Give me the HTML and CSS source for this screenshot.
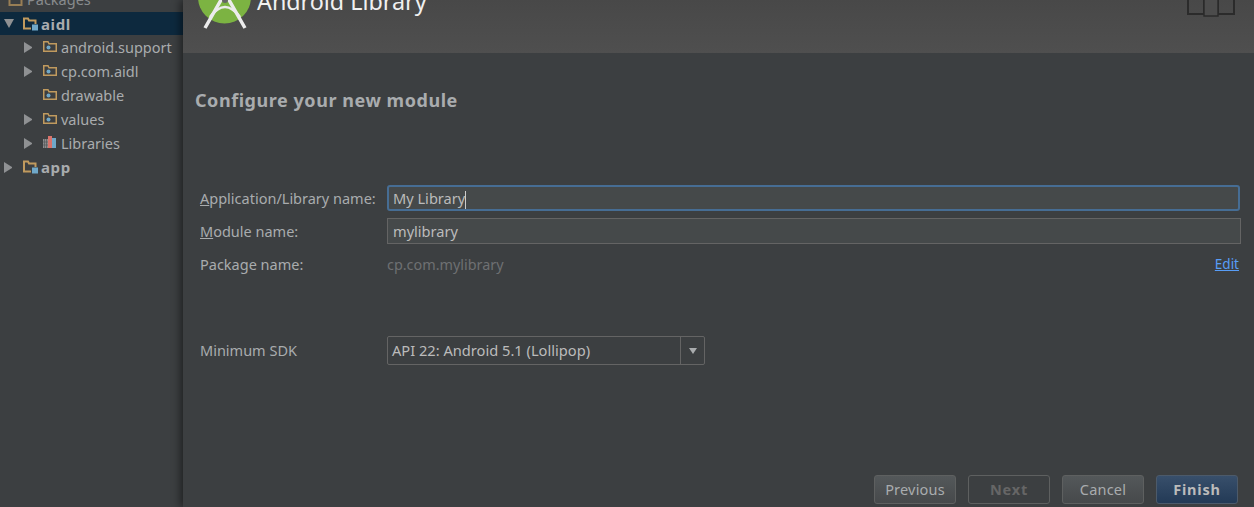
FILE: index.html
```html
<!DOCTYPE html>
<html>

<head>
    <title>Android Library</title>
    <link rel="stylesheet" href="styles.css">
</head>

<body>
    <div class="main">
        <div class="sidebar">
            <div class="tree-row tree-top">
                <svg class="folder" width="16" height="16" viewBox="0 0 16 16"><path d="M1.500 14V3.500h4l1 2h7V14z" fill="none" stroke="#c09a5e" stroke-width="2"/></svg>
                <span class="tree-text">Packages</span>
            </div>
            <div class="tree-row tree-selected">
                <span class="arrow arrow-down"></span>
                <svg class="folder" width="16" height="16" viewBox="0 0 16 16"><path d="M2 8.500V2.500h4l1 2h6.500V8M2 8v4.500h7" fill="none" stroke="#c09a5e" stroke-width="2"/><rect x="10" y="8.500" width="6" height="6" fill="#6fa8c9"/></svg>
                <span class="tree-text tree-bold">aidl</span>
            </div>
            <div class="tree-row tree-child">
                <span class="arrow arrow-right"></span>
                <svg class="folder" width="16" height="16" viewBox="0 0 16 16"><path d="M1.750 12.250V2.750H6l1 2h7.250v7.500z" fill="none" stroke="#c09a5e" stroke-width="1.500"/><circle cx="6.500" cy="8.500" r="2" fill="#6fa8c9"/></svg>
                <span class="tree-text">android.support</span>
            </div>
            <div class="tree-row tree-child">
                <span class="arrow arrow-right"></span>
                <svg class="folder" width="16" height="16" viewBox="0 0 16 16"><path d="M1.750 12.250V2.750H6l1 2h7.250v7.500z" fill="none" stroke="#c09a5e" stroke-width="1.500"/><circle cx="6.500" cy="8.500" r="2" fill="#6fa8c9"/></svg>
                <span class="tree-text">cp.com.aidl</span>
            </div>
            <div class="tree-row tree-child">
                <span class="arrow"></span>
                <svg class="folder" width="16" height="16" viewBox="0 0 16 16"><path d="M1.750 12.250V2.750H6l1 2h7.250v7.500z" fill="none" stroke="#c09a5e" stroke-width="1.500"/><circle cx="6.500" cy="8.500" r="2" fill="#6fa8c9"/></svg>
                <span class="tree-text">drawable</span>
            </div>
            <div class="tree-row tree-child">
                <span class="arrow arrow-right"></span>
                <svg class="folder" width="16" height="16" viewBox="0 0 16 16"><path d="M1.750 12.250V2.750H6l1 2h7.250v7.500z" fill="none" stroke="#c09a5e" stroke-width="1.500"/><circle cx="6.500" cy="8.500" r="2" fill="#6fa8c9"/></svg>
                <span class="tree-text">values</span>
            </div>
            <div class="tree-row tree-child">
                <span class="arrow arrow-right"></span>
                <svg class="folder" width="16" height="16" viewBox="0 0 16 16"><rect x="1" y="4" width="5" height="9" fill="#8c8c8c"/><path d="M2.500 4v9M4.500 4v9M1 7h5M1 10h5" stroke="#55575a" stroke-width=".7"/><rect x="6" y="1" width="4" height="12" fill="#d9736b"/><rect x="10" y="3" width="4" height="10" fill="#6fa8c9"/></svg>
                <span class="tree-text">Libraries</span>
            </div>
            <div class="tree-row">
                <span class="arrow arrow-right"></span>
                <svg class="folder" width="16" height="16" viewBox="0 0 16 16"><path d="M2 8.500V2.500h4l1 2h6.500V8M2 8v4.500h7" fill="none" stroke="#c09a5e" stroke-width="2"/><rect x="10" y="8.500" width="6" height="6" fill="#6fa8c9"/></svg>
                <span class="tree-text tree-bold">app</span>
            </div>
        </div>

        <div class="dialog">
            <div class="header">
                <svg class="logo" width="54" height="32" viewBox="0 0 54 32">
                    <circle cx="26.500" cy="-3" r="26.500" fill="#7cb342"/>
                    <path d="M27 -7L7 28M27 -7L47 28" stroke="#ececec" stroke-width="3.500" fill="none"/>
                    <path d="M12 17Q27 -3 42 17" stroke="#ececec" stroke-width="2.500" fill="none"/>
                    <circle cx="27" cy="0" r="3" fill="#666"/>
                </svg>
                <div class="header-title">Android Library</div>
                <svg class="book" width="48" height="18" viewBox="0 0 48 18">
                    <path d="M1 0V14H17V0M31 0V14H47V0" fill="none" stroke="#2b2b2b" stroke-width="2"/>
                    <path d="M17 0V16H31V0" fill="#4c4c4c" stroke="#2b2b2b" stroke-width="1.500"/>
                </svg>
            </div>

            <div class="content">
                <h1>Configure your new module</h1>

                <div class="form">
                    <label><u>A</u>pplication/Library name:</label>
                    <div class="input input-focus">My Library<span class="caret"></span></div>

                    <label><u>M</u>odule name:</label>
                    <div class="input">mylibrary</div>

                    <label>Package name:</label>
                    <div class="package-line">
                        <span class="package">cp.com.mylibrary</span>
                        <a class="edit" href="#">Edit</a>
                    </div>
                </div>

                <div class="form form-sdk">
                    <label>Minimum SDK</label>
                    <div class="select">
                        <span class="select-text">API 22: Android 5.1 (Lollipop)</span>
                        <span class="select-btn"><span class="select-arrow"></span></span>
                    </div>
                </div>

                <div class="buttons">
                    <button>Previous</button>
                    <button class="btn-disabled">Next</button>
                    <button>Cancel</button>
                    <button class="btn-default">Finish</button>
                </div>
            </div>
        </div>
    </div>
</body>

</html>
```

FILE: styles.css
```css
* {
    margin: 0;
    box-sizing: border-box;
}

body {
    background-color: #3c3f41;
    font-family: "Noto Sans", sans-serif;
    font-size: 14.500px;
    color: #a9acae;
    overflow: hidden;
}

.main {
    height: 507px;
    display: flex;
}

/* project tree */
.sidebar {
    width: 183px;
    flex-shrink: 0;
    background-color: #3c3f41;
    margin-top: -15px;
}

.tree-row {
    height: 24px;
    display: flex;
    align-items: center;
    padding-left: 4px;
}

.tree-top {
    height: 27px;
    padding-left: 9px;
    opacity: .7;
}

.tree-selected {
    height: 23px;
    background-color: #0d293e;
}

.tree-child {
    padding-left: 24px;
}

.arrow {
    width: 9px;
    height: 11px;
    margin-right: 10px;
    flex-shrink: 0;
}

.arrow-right {
    border-left: 8px solid #8f9193;
    border-top: 5px solid transparent;
    border-bottom: 5px solid transparent;
}

.arrow-down {
    height: 8px;
    width: 10px;
    margin-right: 9px;
    border-top: 9px solid #8f9193;
    border-left: 5px solid transparent;
    border-right: 5px solid transparent;
}

.folder {
    flex-shrink: 0;
    margin-left: -1px;
}

.tree-text {
    margin-left: 3px;
}

.tree-bold {
    font-size: 15px;
    font-weight: 700;
    letter-spacing: .6px;
}

/* wizard dialog */
.dialog {
    flex: 1;
    display: flex;
    flex-direction: column;
    box-shadow: -3px 0 8px rgba(0, 0, 0, .45);
    position: relative;
}

.header {
    height: 53px;
    background: linear-gradient(#484848, #4f4f4f);
    display: flex;
    align-items: flex-start;
    overflow: hidden;
    padding-left: 15px;
}

.logo {
    flex-shrink: 0;
}

.header-title {
    font-size: 23.300px;
    color: #f0f0f0;
    line-height: 28px;
    margin-top: -13px;
    margin-left: 5px;
    flex: 1;
}

.book {
    margin-right: 19px;
}

.content {
    flex: 1;
    display: flex;
    flex-direction: column;
    padding: 34px 13px 3px 12px;
}

h1 {
    font-size: 18px;
    line-height: 26px;
    font-weight: 700;
    color: #a9acae;
    letter-spacing: .55px;
    margin-bottom: 68px;
}

.form {
    display: grid;
    grid-template-columns: 187px 1fr;
    grid-auto-rows: 33px;
    align-items: center;
    padding-left: 5px;
}

.form-sdk {
    margin-top: 54px;
}

.form-sdk label {
    margin-bottom: 2px;
}

label {
    white-space: nowrap;
}

.input {
    height: 26px;
    line-height: 24px;
    padding-left: 5px;
    border: 1px solid #646464;
    background-color: #45494a;
    color: #bbb;
    font-size: 14.600px;
}

.input-focus {
    border: 2px solid #466d94;
    line-height: 22px;
    padding-left: 4px;
    border-radius: 3px;
    margin-right: 1px;
}

.caret {
    display: inline-block;
    width: 1px;
    height: 18px;
    background-color: #ccc;
    vertical-align: middle;
}

.package-line {
    display: flex;
    justify-content: space-between;
    padding-right: 2px;
    padding-top: 1px;
}

.package {
    color: #6e7072;
    font-size: 14.400px;
}

.edit {
    color: #589df6;
    font-size: 13.500px;
}

.select {
    width: 318px;
    height: 29px;
    display: flex;
    border: 1px solid #646464;
    border-radius: 2px;
}

.select-text {
    flex: 1;
    padding-left: 4px;
    line-height: 27px;
    color: #bbb;
    font-size: 14.650px;
}

.select-btn {
    width: 24px;
    border-left: 1px solid #646464;
    display: flex;
    align-items: center;
    justify-content: center;
}

.select-arrow {
    border-top: 6px solid #a9acae;
    border-left: 4px solid transparent;
    border-right: 4px solid transparent;
}

.buttons {
    margin-top: auto;
    display: flex;
    justify-content: flex-end;
    gap: 12px;
    padding-right: 3px;
}

button {
    width: 82px;
    height: 29px;
    padding-bottom: 3px;
    border: 1px solid #5e6060;
    border-radius: 3px;
    background: linear-gradient(#54585a, #46494b);
    color: #a9acae;
    font-family: "Noto Sans", sans-serif;
    font-size: 14.500px;
    letter-spacing: .2px;
}

.btn-disabled {
    background: transparent;
    color: #666;
    font-weight: 700;
    letter-spacing: .8px;
}

.btn-default {
    background: linear-gradient(#384f6b, #233a56);
    border-color: #4c5a6a;
    color: #bbb;
    font-weight: 700;
    letter-spacing: .8px;
}
```
